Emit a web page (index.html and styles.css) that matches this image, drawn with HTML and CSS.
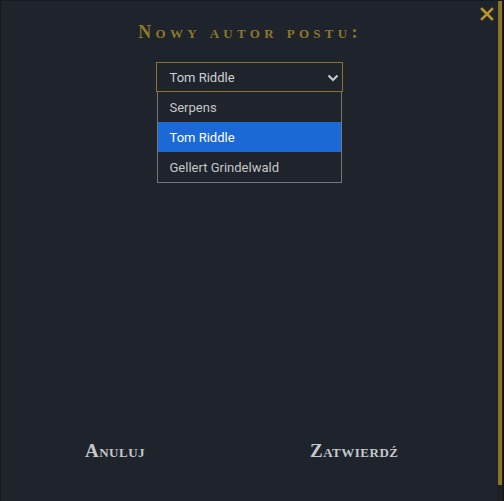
FILE: index.html
```html
<!DOCTYPE html>
<html lang="pl">
<head>
<meta charset="utf-8">
<title>Nowy autor postu</title>
<link rel="stylesheet" href="styles.css">
</head>
<body>
<div class="modal">
  <div class="main">
    <button class="close" aria-label="Zamknij">
      <svg width="14" height="14" viewBox="0 0 14 14"><path d="M2 2 L12 12 M12 2 L2 12" stroke="#b8952c" stroke-width="2.6" stroke-linecap="square"/></svg>
    </button>
    <h1 class="title">Nowy autor postu:</h1>
    <div class="select-wrap">
      <div class="select">
        <span>Tom Riddle</span>
        <svg class="chev" width="12" height="8" viewBox="0 0 12 8"><path d="M1.5 1.5 L6 6 L10.5 1.5" fill="none" stroke="#c8c8c8" stroke-width="2.2"/></svg>
      </div>
      <ul class="options">
        <li class="opt">Serpens</li>
        <li class="opt active">Tom Riddle</li>
        <li class="opt">Gellert Grindelwald</li>
      </ul>
    </div>
    <div class="spacer"></div>
    <div class="actions">
      <button class="btn btn-cancel">Anuluj</button>
      <button class="btn">Zatwierdź</button>
    </div>
  </div>
  <div class="rail"><div class="thumb"></div></div>
</div>
</body>
</html>
```
FILE: styles.css
```css
html, body {
  margin: 0;
  padding: 0;
  height: 100%;
  background: #1f232b;
}
.modal {
  display: flex;
  height: 501px;
  width: 504px;
  box-sizing: border-box;
  border-left: 1px solid #16191e;
  border-top: 1px solid #16191e;
  border-right: 1px solid #111214;
  background: #1f232b;
}
.main {
  position: relative;
  flex: 1;
  display: flex;
  flex-direction: column;
  align-items: center;
}
.close {
  position: absolute;
  top: 6px;
  right: 3px;
  background: none;
  border: 0;
  padding: 0;
  width: 14px;
  height: 14px;
  cursor: pointer;
}
.close svg { display: block; }
.title {
  margin: 20px 0 0;
  font-family: "Liberation Serif", serif;
  font-variant: small-caps;
  font-weight: bold;
  font-size: 18px;
  letter-spacing: 4.3px;
  line-height: 22px;
  color: #8a782b;
  padding-left: 2px;
}
.select-wrap {
  margin-top: 19px;
  width: 187px;
  font-family: Roboto, "Liberation Sans", sans-serif;
  font-size: 13px;
}
.select {
  box-sizing: border-box;
  height: 30px;
  border: 1px solid #8a7428;
  display: flex;
  align-items: center;
  justify-content: space-between;
  padding: 0 3px 0 13px;
  color: #cfd0d2;
}
.chev { display: block; margin-top: 1px; }
.options {
  list-style: none;
  margin: 0 1px;
  padding: 0;
  border: 1px solid #74767a;
  border-top: 0;
}
.opt {
  height: 30px;
  line-height: 31px;
  padding-left: 12px;
  color: #c6c7c9;
}
.opt.active {
  background: #1a69d6;
  color: #ffffff;
}
.spacer { flex: 1; }
.actions {
  align-self: stretch;
  display: flex;
  padding-left: 84px;
  margin-bottom: 39px;
}
.btn {
  background: none;
  border: 0;
  padding: 0;
  font-family: "Liberation Serif", serif;
  font-variant: small-caps;
  font-weight: bold;
  font-size: 19px;
  letter-spacing: 0.5px;
  line-height: 22px;
  color: #c5c8cc;
  text-align: left;
  cursor: pointer;
}
.btn-cancel { width: 225px; }
.rail {
  width: 6px;
  background: #1d1f23;
}
.thumb {
  width: 4px;
  margin-left: 1px;
  height: 484px;
  background: #8b7426;
}
```
